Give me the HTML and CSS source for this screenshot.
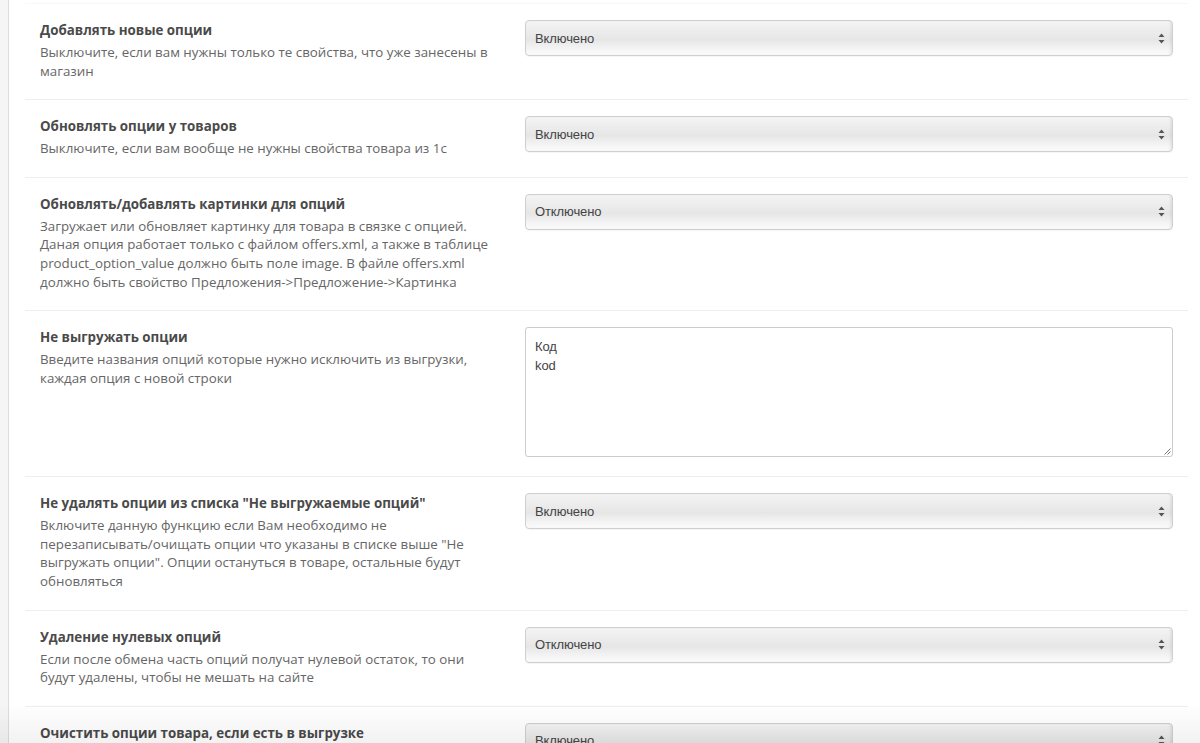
FILE: index.html
```html
<!DOCTYPE html>
<html lang="ru">
<head>
<meta charset="utf-8">
<title>Опции</title>
<link rel="stylesheet" href="styles.css">
</head>
<body>
<div class="page">
  <div class="gutter"></div>
  <main class="content">
    <div class="form">
      <div class="row">
        <div class="label">
          <div class="title">Добавлять новые опции</div>
          <div class="help">Выключите, если вам нужны только те свойства, что уже занесены в магазин</div>
        </div>
        <div class="control">
          <div class="select"><span>Включено</span><svg class="arrows" width="7" height="11" viewBox="0 0 7 11"><path d="M3.5 0.5 L6.5 4 L0.5 4 Z M3.5 10.5 L6.5 7 L0.5 7 Z" fill="#555"/></svg></div>
        </div>
      </div>
      <div class="row">
        <div class="label">
          <div class="title">Обновлять опции у товаров</div>
          <div class="help">Выключите, если вам вообще не нужны свойства товара из 1с</div>
        </div>
        <div class="control">
          <div class="select"><span>Включено</span><svg class="arrows" width="7" height="11" viewBox="0 0 7 11"><path d="M3.5 0.5 L6.5 4 L0.5 4 Z M3.5 10.5 L6.5 7 L0.5 7 Z" fill="#555"/></svg></div>
        </div>
      </div>
      <div class="row">
        <div class="label">
          <div class="title">Обновлять/добавлять картинки для опций</div>
          <div class="help">Загружает или обновляет картинку для товара в связке с опцией. Даная опция работает только с файлом offers.xml, а также в таблице product_option_value должно быть поле image. В файле offers.xml должно быть свойство Предложения-&gt;Предложение-&gt;Картинка</div>
        </div>
        <div class="control">
          <div class="select"><span>Отключено</span><svg class="arrows" width="7" height="11" viewBox="0 0 7 11"><path d="M3.5 0.5 L6.5 4 L0.5 4 Z M3.5 10.5 L6.5 7 L0.5 7 Z" fill="#555"/></svg></div>
        </div>
      </div>
      <div class="row">
        <div class="label">
          <div class="title">Не выгружать опции</div>
          <div class="help">Введите названия опций которые нужно исключить из выгрузки, каждая опция с новой строки</div>
        </div>
        <div class="control">
          <div class="textarea"><div>Код</div><div>kod</div><svg class="grip" width="8" height="8" viewBox="0 0 8 8"><path d="M7.5 1.5 L1.5 7.5 M7.5 4.5 L4.5 7.5" stroke="#777" stroke-width="1"/></svg></div>
        </div>
      </div>
      <div class="row">
        <div class="label">
          <div class="title">Не удалять опции из списка "Не выгружаемые опций"</div>
          <div class="help">Включите данную функцию если Вам необходимо не перезаписывать/очищать опции что указаны в списке выше "Не выгружать опции". Опции остануться в товаре, остальные будут обновляться</div>
        </div>
        <div class="control">
          <div class="select"><span>Включено</span><svg class="arrows" width="7" height="11" viewBox="0 0 7 11"><path d="M3.5 0.5 L6.5 4 L0.5 4 Z M3.5 10.5 L6.5 7 L0.5 7 Z" fill="#555"/></svg></div>
        </div>
      </div>
      <div class="row">
        <div class="label">
          <div class="title">Удаление нулевых опций</div>
          <div class="help">Если после обмена часть опций получат нулевой остаток, то они будут удалены, чтобы не мешать на сайте</div>
        </div>
        <div class="control">
          <div class="select"><span>Отключено</span><svg class="arrows" width="7" height="11" viewBox="0 0 7 11"><path d="M3.5 0.5 L6.5 4 L0.5 4 Z M3.5 10.5 L6.5 7 L0.5 7 Z" fill="#555"/></svg></div>
        </div>
      </div>
      <div class="row">
        <div class="label">
          <div class="title">Очистить опции товара, если есть в выгрузке</div>
        </div>
        <div class="control">
          <div class="select"><span>Включено</span><svg class="arrows" width="7" height="11" viewBox="0 0 7 11"><path d="M3.5 0.5 L6.5 4 L0.5 4 Z M3.5 10.5 L6.5 7 L0.5 7 Z" fill="#555"/></svg></div>
        </div>
      </div>
    </div>
  </main>
</div>
<div class="fade"></div>
</body>
</html>
```
FILE: styles.css
```css
html, body {
  margin: 0;
  padding: 0;
  height: 100%;
  overflow: hidden;
  background: #fff;
}
body {
  font-family: "Open Sans", "Noto Sans", sans-serif;
  font-size: 13.33px;
  color: #666;
}
.page {
  display: flex;
  min-height: 100%;
}
.gutter {
  width: 8px;
  flex: 0 0 8px;
  background: #f5f5f5;
  border-right: 1px solid #dddddd;
}
.content {
  flex: 1;
  padding: 3px 12px 0 16px;
}
.form {
  display: flex;
  flex-direction: column;
}
.row {
  display: flex;
  gap: 33px;
  padding: 16px 15px 19px 15px;
  border-top: 1px solid #eeeeee;
}
.row:first-child {
  border-top-color: #f7f7f7;
}
.label {
  width: 452px;
  flex: 0 0 452px;
}
.title {
  font-weight: 700;
  color: #4a4a4a;
  line-height: 20px;
}
.help {
  margin-top: 3px;
  line-height: 18.6px;
  color: #666;
}
.control {
  flex: 1;
}
.select {
  height: 36px;
  box-sizing: border-box;
  border: 1px solid #cfcfcf;
  border-radius: 4px;
  background: linear-gradient(to bottom, #f4f4f4 0%, #ebebeb 35%, #e6e6e6 55%, #f3f3f3 80%, #fbfbfb 100%);
  box-shadow: inset -2px 0 2px rgba(0,0,0,0.06), 0 1px 1px rgba(0,0,0,0.04);
  display: flex;
  align-items: center;
  justify-content: space-between;
  padding: 0 7px 0 9px;
  font-family: "Liberation Sans", Arial, sans-serif;
  font-size: 13px;
  color: #444;
  letter-spacing: -0.1px;
}
.arrows {
  display: block;
}
.textarea {
  position: relative;
  height: 130px;
  box-sizing: border-box;
  border: 1px solid #cccccc;
  border-radius: 3px;
  background: #fff;
  padding: 9px 9px;
  font-family: "Liberation Sans", Arial, sans-serif;
  font-size: 13px;
  line-height: 19px;
  color: #444;
  letter-spacing: -0.1px;
}
.grip {
  position: absolute;
  right: 1px;
  bottom: 1px;
}
.fade {
  position: fixed;
  left: 0;
  right: 0;
  bottom: 0;
  height: 40px;
  background: linear-gradient(to bottom, rgba(0,0,0,0) 0%, rgba(0,0,0,0.05) 100%);
  pointer-events: none;
}
```
